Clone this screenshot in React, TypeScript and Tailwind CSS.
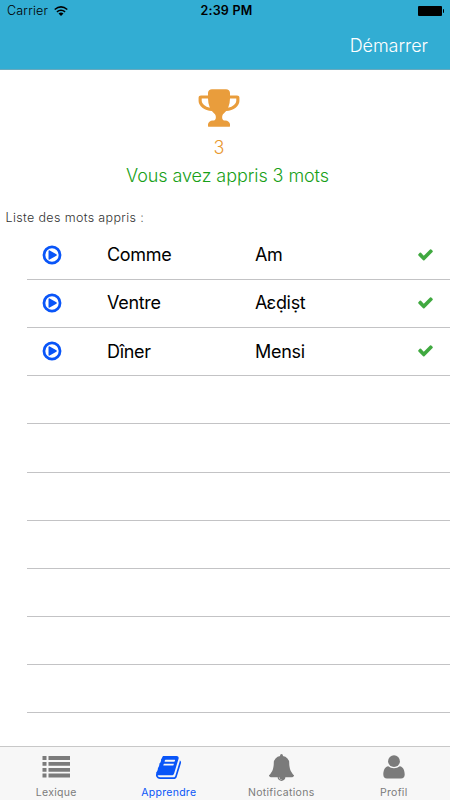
import type { ReactNode } from 'react';

type IconProps = { className?: string };

function Glyph({ className, children }: IconProps & { children: ReactNode }) {
  return (
    <svg viewBox="0 0 1792 1792" fill="currentColor" className={className} aria-hidden="true">
      {children}
    </svg>
  );
}

function TrophyIcon({ className }: IconProps) {
  return (
    <Glyph className={className}>
      <path d="M522 883q-74-162-74-371h-256v96q0 78 94.500 162t235.500 113zm1078-275v-96h-256q0 209-74 371 141-29 235.500-113t94.500-162zm128-128v128q0 71-41.500 143t-112 130-173 97.500-215.500 44.500q-42 54-95 95-38 34-52.500 72.500t-14.500 89.500q0 54 30.500 91t97.500 37q75 0 133.500 45.500t58.500 114.500v64q0 14-9 23t-23 9h-832q-14 0-23-9t-9-23v-64q0-69 58.500-114.500t133.500-45.500q67 0 97.500-37t30.500-91q0-51-14.500-89.500t-52.500-72.500q-53-41-95-95-113-5-215.500-44.500t-173-97.500-112-130-41.500-143v-128q0-40 28-68t68-28h288v-96q0-66 47-113t113-47h576q66 0 113 47t47 113v96h288q40 0 68 28t28 68z" />
    </Glyph>
  );
}

function PlayIcon({ className }: IconProps) {
  return (
    <Glyph className={className}>
      <circle cx="896" cy="896" r="656" fill="none" stroke="currentColor" strokeWidth="224" />
      <path d="M1184 896q0 37-32 55l-544 320q-15 9-32 9-16 0-32-8-32-19-32-56v-640q0-37 32-56 33-18 64 1l544 320q32 18 32 55z" transform="translate(100 0)" />
    </Glyph>
  );
}

function CheckIcon({ className }: IconProps) {
  return (
    <Glyph className={className}>
      <path d="M1671 566q0 40-28 68l-724 724-136 136q-28 28-68 28t-68-28l-136-136-362-362q-28-28-28-68t28-68l136-136q28-28 68-28t68 28l294 295 656-657q28-28 68-28t68 28l136 136q28 28 28 68z" />
    </Glyph>
  );
}

function ListIcon({ className }: IconProps) {
  return (
    <svg viewBox="0 0 28 22" fill="currentColor" className={className} aria-hidden="true">
      <path d="M0.500 0h4v4h-4zM6.500 0h21.500v4h-21.500zM0.500 6h4v3.700h-4zM6.500 6h21.500v3.700h-21.500zM0.500 12h4v3.700h-4zM6.500 12h21.500v3.700h-21.500zM0.500 17.500h4v4h-4zM6.500 17.500h21.500v4h-21.500z" />
    </svg>
  );
}

function BookIcon({ className }: IconProps) {
  return (
    <Glyph className={className}>
      <path d="M1703 478q40 57 18 129l-275 906q-19 64-76.500 107.500t-122.500 43.500h-923q-77 0-148.500-53.500t-99.500-131.500q-24-67-2-127 0-4 3-27t4-37q1-8-3-21.500t-3-19.500q2-11 8-21t16.500-23.500 16.500-23.500q23-38 45-91.500t30-91.500q3-10 .5-30t-.5-28q3-11 17-28t17-23q21-36 42-92t25-90q1-9-2.500-32t.5-28q4-13 22-30.500t22-22.500q19-26 42.500-84.500t27.500-96.500q1-8-3-25.500t-2-26.500q2-8 9-18t18-23 17-21q8-12 16.500-30.500t15-35 16-36 19.500-32 26.500-23.500 36-11.500 47.500 5.500l-1 3q38-9 51-9h761q74 0 114 56t18 130l-274 906q-36 119-71.500 153.500t-128.500 34.500h-869q-27 0-38 15-11 16-1 43 24 70 144 70h923q29 0 56-15.500t35-41.500l300-987q7-22 5-57 38 15 59 43zm-1064 2q-4 13 2 22.500t20 9.500h608q13 0 25.500-9.500t16.500-22.500l21-64q4-13-2-22.500t-20-9.500h-608q-13 0-25.500 9.500t-16.500 22.500zm-83 256q-4 13 2 22.500t20 9.500h608q13 0 25.500-9.500t16.500-22.500l21-64q4-13-2-22.500t-20-9.500h-608q-13 0-25.500 9.500t-16.500 22.500z" />
    </Glyph>
  );
}

function BellIcon({ className }: IconProps) {
  return (
    <Glyph className={className}>
      <path d="M912 1696q0-16-16-16-59 0-101.500-42.500t-42.500-101.500q0-16-16-16t-16 16q0 73 51.500 124.500t124.500 51.500q16 0 16-16zm816-288q0 52-38 90t-90 38h-448q0 106-75 181t-181 75-181-75-75-181h-448q-52 0-90-38t-38-90q50-42 91-88t85-119.500 74.500-158.500 50-206 19.500-260q0-152 117-282.500t307-158.500q-8-19-8-39 0-40 28-68t68-28 68 28 28 68q0 20-8 39 190 28 307 158.500t117 282.500q0 139 19.500 260t50 206 74.500 158.500 85 119.500 91 88z" />
    </Glyph>
  );
}

function UserIcon({ className }: IconProps) {
  return (
    <svg viewBox="0 0 22 24" fill="currentColor" className={className} aria-hidden="true">
      <circle cx="11" cy="6.200" r="5.900" />
      <path d="M5.200 11.200C7.200 12.300 8.300 13.200 11 13.200S14.800 12.300 16.800 11.200C20.200 11.500 21.700 15.600 21.700 19.500C21.700 22.200 20.300 23.600 18 23.600H4C1.700 23.600.3 22.200.3 19.500C.3 15.600 1.800 11.500 5.200 11.200Z" />
    </svg>
  );
}

function WifiIcon({ className }: IconProps) {
  return (
    <svg viewBox="0 0 14 10" fill="none" stroke="currentColor" strokeWidth="1.5" className={className} aria-hidden="true">
      <path d="M0.700 3.500Q7-1.700 13.300 3.500M2.900 5.800Q7 2.500 11.100 5.800" />
      <path d="M4.500 7.500Q7 5.600 9.500 7.500L7 10z" fill="currentColor" stroke="none" />
    </svg>
  );
}

const words = [
  { french: 'Comme', kabyle: 'Am' },
  { french: 'Ventre', kabyle: 'Aɛḍiṣt' },
  { french: 'Dîner', kabyle: 'Mensi' },
];

const emptyRows = [1, 2, 3, 4, 5, 6, 7];

const tabs = [
  { label: 'Lexique', icon: <ListIcon className="h-[22px] w-7" />, active: false },
  { label: 'Apprendre', icon: <BookIcon className="size-[27px]" />, active: true },
  { label: 'Notifications', icon: <BellIcon className="size-[27px]" />, active: false },
  { label: 'Profil', icon: <UserIcon className="h-6 w-[22px]" />, active: false },
];

export default function App() {
  return (
    <div className="flex h-[800px] w-[450px] flex-col overflow-hidden bg-white font-['Inter','Noto_Sans',sans-serif]">
      <header className="h-[70px] shrink-0 border-b border-[#69a9bd] bg-[#32add3]">
        <div className="grid h-[23px] grid-cols-3 items-center pr-1.5 pl-[7px] text-black">
          <div className="flex items-center gap-1.5">
            <span className="text-[12.5px] font-light tracking-[0.2px]">Carrier</span>
            <WifiIcon className="mb-0.5 h-2.5 w-3.5" />
          </div>
          <span className="pl-0.5 text-center text-[12.5px] font-semibold tracking-[0.25px]">2:39 PM</span>
          <div className="mb-0.5 flex items-center justify-end gap-px">
            <span className="h-2.5 w-6 rounded-[1px] bg-black" />
            <span className="h-1 w-px rounded-r bg-black" />
          </div>
        </div>
        <div className="flex h-[46px] items-center justify-end pr-[22px]">
          <button className="text-[18px] leading-6 font-light tracking-[-0.05px] text-white">Démarrer</button>
        </div>
      </header>

      <section className="flex h-[161.6px] shrink-0 flex-col pt-4">
        <div className="flex flex-col items-center pr-3">
          <TrophyIcon className="size-11 text-[#e99d3c]" />
          <span className="mt-1.5 text-[18px] leading-6 font-light text-[#e9982f]">3</span>
        </div>
        <p className="mt-1 pl-[5px] text-center text-[18px] leading-6 font-light tracking-[-0.08px] text-[#18a018]">Vous avez appris 3 mots</p>
        <h2 className="mt-5 pl-[5.5px] text-[12.5px] leading-5 font-light tracking-[0.36px] text-[#333]">Liste des mots appris :</h2>
      </section>

      <main className="min-h-0 flex-1 overflow-hidden pl-[27px]">
        {words.map((word) => (
          <div key={word.french} className="flex h-[48.2px] items-center border-b border-[#c3c3c5] text-[18px] tracking-[-0.3px] text-black">
            <div className="w-20 pb-px pl-[14px]">
              <PlayIcon className="size-[22px] text-[#0955f8]" />
            </div>
            <span className="w-[148px] pb-px">{word.french}</span>
            <span className="flex-1 pb-px">{word.kabyle}</span>
            <CheckIcon className="mr-4 mb-0.5 size-[17px] text-[#40a940]" />
          </div>
        ))}
        {emptyRows.map((row) => (
          <div key={row} className="h-[48.2px] border-b border-[#c3c3c5]" />
        ))}
      </main>

      <nav className="grid h-[54px] shrink-0 grid-cols-4 border-t border-[#c8c8c8] bg-[#f7f7f7]">
        {tabs.map((tab) => (
          <button
            key={tab.label}
            className={`flex flex-col items-center ${tab.active ? 'text-[#0955f8]' : 'text-[#7b7b7b]'}`}
          >
            <span className="flex h-10 items-center">{tab.icon}</span>
            <span className="text-[10.5px] leading-3 tracking-[0.3px]">{tab.label}</span>
          </button>
        ))}
      </nav>
    </div>
  );
}
